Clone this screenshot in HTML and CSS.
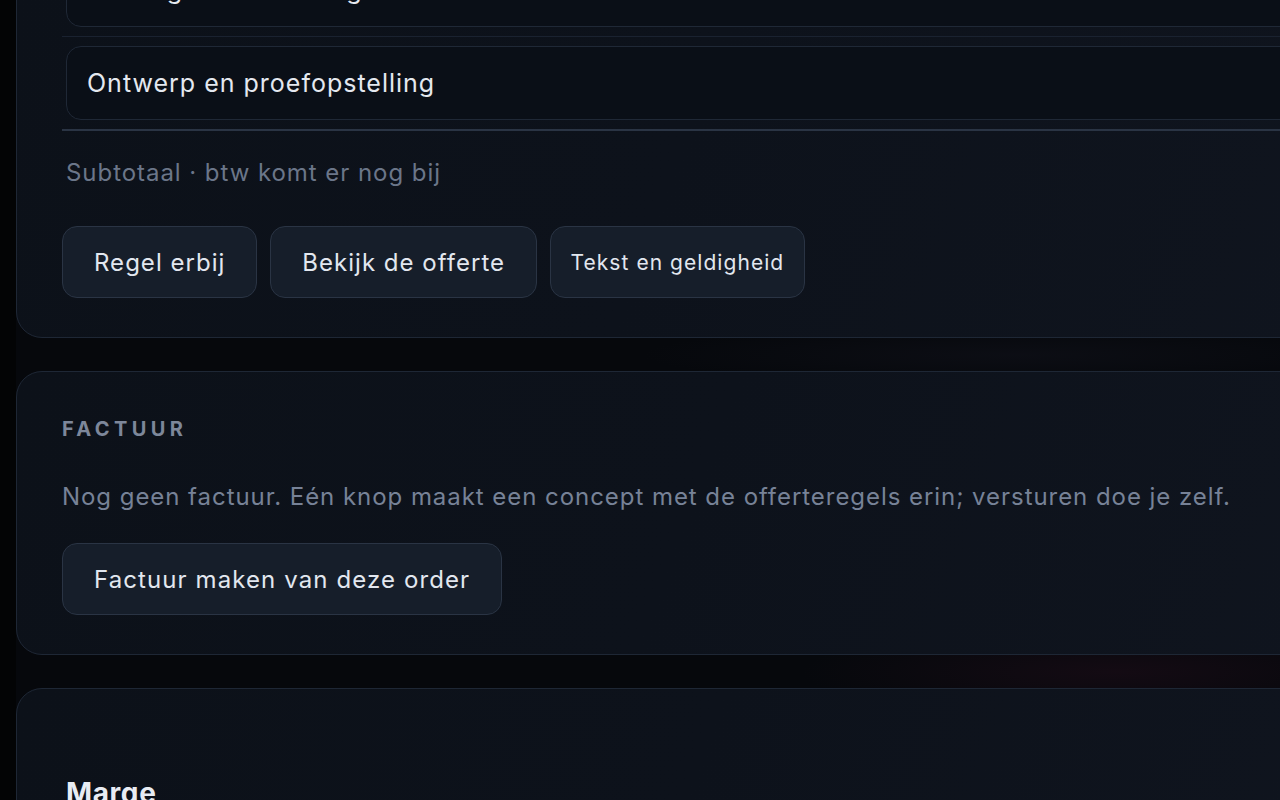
FILE: index.html
```html
<!DOCTYPE html>
<html lang="nl">
<head>
<meta charset="utf-8">
<title>Order</title>
<link rel="stylesheet" href="styles.css">
</head>
<body>
<div class="page">
  <section class="card card-lines">
    <div class="lines">
      <div class="line-row">
        <div class="field">Montage en afstelling</div>
      </div>
      <div class="line-row last">
        <div class="field">Ontwerp en proefopstelling</div>
      </div>
    </div>
    <p class="subtotal">Subtotaal · btw komt er nog bij</p>
    <div class="actions">
      <button class="btn">Regel erbij</button>
      <button class="btn">Bekijk de offerte</button>
      <button class="btn btn-small">Tekst en geldigheid</button>
    </div>
  </section>

  <section class="card">
    <h2 class="eyebrow">FACTUUR</h2>
    <p class="muted">Nog geen factuur. Eén knop maakt een concept met de offerteregels erin; versturen doe je zelf.</p>
    <div class="actions">
      <button class="btn btn-wide">Factuur maken van deze order</button>
    </div>
  </section>

  <section class="card card-marge">
    <h3 class="title">Marge</h3>
  </section>
</div>
</body>
</html>
```

FILE: styles.css
```css
html, body {
  margin: 0;
  padding: 0;
  overflow: hidden;
  height: 100%;
}
body {
  background: #030405;
  font-family: Inter, "Noto Sans", sans-serif;
  color: #e6eaf0;
}
.page {
  margin-left: 16px;
  width: 1500px;
  min-height: 900px;
  display: flex;
  flex-direction: column;
  gap: 33px;
  background:
    radial-gradient(ellipse 420px 60px at 1100px 672px, rgba(55, 18, 38, 0.28), transparent 75%),
    radial-gradient(ellipse 500px 40px at 1000px 355px, rgba(30, 30, 45, 0.25), transparent 75%),
    #06080c;
}
.card {
  box-sizing: border-box;
  border: 1px solid #1e2735;
  border-radius: 26px;
  background: linear-gradient(110deg, #0c1119 0%, #0d121b 45%, #10151f 100%);
  padding: 42px 45px 39px;
}
.card-lines {
  margin-top: -67px;
  padding-top: 10px;
}
.lines {
  display: flex;
  flex-direction: column;
}
.line-row {
  padding: 9px 0 9px 4px;
  border-bottom: 1px solid #1a2230;
}
.line-row.last {
  border-bottom: 2px solid #2a3444;
}
.field {
  box-sizing: border-box;
  height: 74px;
  display: flex;
  align-items: center;
  padding: 0 20px;
  border: 1px solid #1f2836;
  border-radius: 15px;
  background: #0a0f17;
  font-size: 25px;
  color: #e4e8ef;
  letter-spacing: 1px;
}
.subtotal {
  margin: 26px 0 0 4px;
  font-size: 24px;
  line-height: 32px;
  color: #6b7689;
  letter-spacing: 0.95px;
}
.actions {
  display: flex;
  gap: 13px;
  margin-top: 37px;
}
.btn {
  box-sizing: border-box;
  height: 72px;
  padding: 0 31px;
  border: 1px solid #2a3444;
  border-radius: 15px;
  background: #161e2a;
  color: #e2e7ef;
  font-family: Inter, "Noto Sans", sans-serif;
  font-size: 24px;
  letter-spacing: 1.02px;
}
.btn-small {
  font-size: 21px;
  padding: 0 19.5px;
  letter-spacing: 1.05px;
}
.btn-wide {
  letter-spacing: 1.1px;
}
.eyebrow {
  margin: 0;
  font-size: 20px;
  line-height: 30px;
  font-weight: 700;
  letter-spacing: 4.4px;
  color: #7d879a;
}
.muted {
  margin: 35px 0 0;
  font-size: 24px;
  line-height: 36px;
  color: #778297;
  letter-spacing: 0.95px;
}
.card .muted + .actions {
  margin-top: 28px;
}
.card-marge {
  min-height: 200px;
}
.title {
  margin: 46px 0 0 4px;
  font-size: 28px;
  line-height: 32px;
  font-weight: 700;
  color: #e8ecf3;
  letter-spacing: 0.6px;
}
```
